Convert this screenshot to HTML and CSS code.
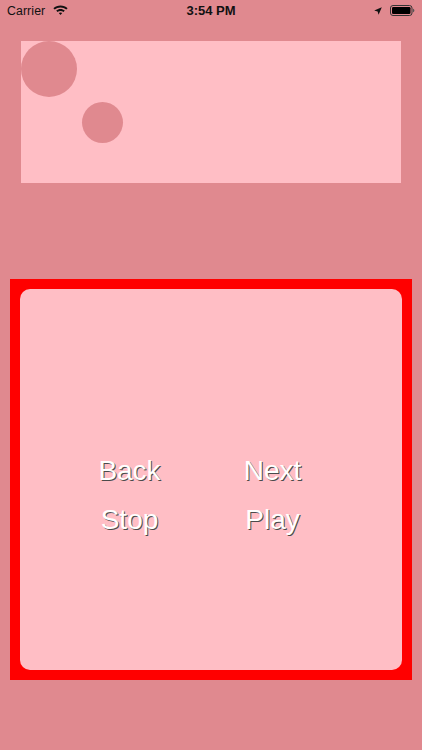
FILE: index.html
```html
<!DOCTYPE html>
<html>
<head>
<meta charset="utf-8">
<link rel="stylesheet" href="styles.css">
</head>
<body>
<div class="screen">
  <div class="status">
    <div class="status-left">
      <span class="carrier">Carrier</span>
      <svg class="wifi" width="15" height="11" viewBox="0 0 15 11">
        <path d="M7.5 0.5C4.7 0.5 2.3 1.5 0.4 3.2L1.7 4.6C3.3 3.2 5.3 2.4 7.5 2.4C9.7 2.4 11.7 3.2 13.3 4.6L14.6 3.2C12.7 1.5 10.3 0.5 7.5 0.5Z" fill="#111"/>
        <path d="M7.5 4C5.9 4 4.4 4.6 3.2 5.6L4.5 7C5.3 6.3 6.4 5.9 7.5 5.9C8.6 5.9 9.7 6.3 10.5 7L11.8 5.6C10.6 4.6 9.1 4 7.5 4Z" fill="#111"/>
        <path d="M7.5 7.5C6.8 7.5 6.2 7.7 5.8 8.1L7.5 10L9.2 8.1C8.8 7.7 8.2 7.5 7.5 7.5Z" fill="#111"/>
      </svg>
    </div>
    <div class="status-time">3:54 PM</div>
    <div class="status-right">
      <svg class="loc" width="8" height="8" viewBox="0 0 8 8">
        <path d="M7.8 0.2L0.2 3.4L3.6 4.4L4.6 7.8Z" fill="#111"/>
      </svg>
      <svg class="battery" width="25" height="11" viewBox="0 0 25 11">
        <rect x="0.5" y="0.5" width="21.5" height="10" rx="2.5" fill="none" stroke="#333" stroke-width="1"/>
        <rect x="2" y="2" width="18.5" height="7" rx="1.2" fill="#000"/>
        <path d="M23 3.8C23.9 4 24.4 4.7 24.4 5.5C24.4 6.3 23.9 7 23 7.2Z" fill="#555"/>
      </svg>
    </div>
  </div>

  <div class="canvas">
    <div class="ball ball-big"></div>
    <div class="ball ball-small"></div>
  </div>

  <div class="frame">
    <div class="panel">
      <div class="controls">
        <span class="btn">Back</span>
        <span class="btn">Next</span>
        <span class="btn">Stop</span>
        <span class="btn">Play</span>
      </div>
    </div>
  </div>
</div>
</body>
</html>
```
FILE: styles.css
```css
html, body {
  margin: 0;
  padding: 0;
}
body {
  background: #e0898f;
  font-family: "Liberation Sans", Arial, sans-serif;
  width: 422px;
  height: 750px;
  overflow: hidden;
}
.screen {
  display: flex;
  flex-direction: column;
}
.status {
  height: 21px;
  display: grid;
  grid-template-columns: 1fr auto 1fr;
  align-items: center;
  color: #111;
}
.status-left {
  display: flex;
  align-items: center;
  padding-left: 7px;
  gap: 8px;
}
.carrier {
  font-size: 12.3px;
  letter-spacing: 0.1px;
}
.wifi {
  display: block;
  margin-top: -1px;
}
.status-time {
  font-size: 13px;
  font-weight: bold;
}
.status-right {
  display: flex;
  justify-content: flex-end;
  align-items: center;
  gap: 8px;
  padding-right: 7px;
}
.loc, .battery {
  display: block;
}
.canvas {
  position: relative;
  margin: 20px 0 0 21px;
  width: 380px;
  height: 142px;
  background: #ffbec5;
}
.ball {
  position: absolute;
  border-radius: 50%;
  background: #e0898f;
}
.ball-big {
  left: 0;
  top: 0;
  width: 56px;
  height: 56px;
}
.ball-small {
  left: 61px;
  top: 61px;
  width: 41px;
  height: 41px;
}
.frame {
  margin: 96px 0 0 10px;
  width: 402px;
  height: 401px;
  box-sizing: border-box;
  padding: 10px;
  background: #ff0000;
}
.panel {
  width: 100%;
  height: 100%;
  background: #ffbec5;
  border-radius: 10px;
  box-sizing: border-box;
  padding: 157px 0 0 38px;
}
.controls {
  display: grid;
  grid-template-columns: 143px 143px;
  grid-auto-rows: 49px;
  line-height: 49px;
}
.btn {
  text-align: center;
  color: #ffffff;
  font-size: 28px;
  text-shadow: 1px 1px 0 #4a4a4a;
}
```
